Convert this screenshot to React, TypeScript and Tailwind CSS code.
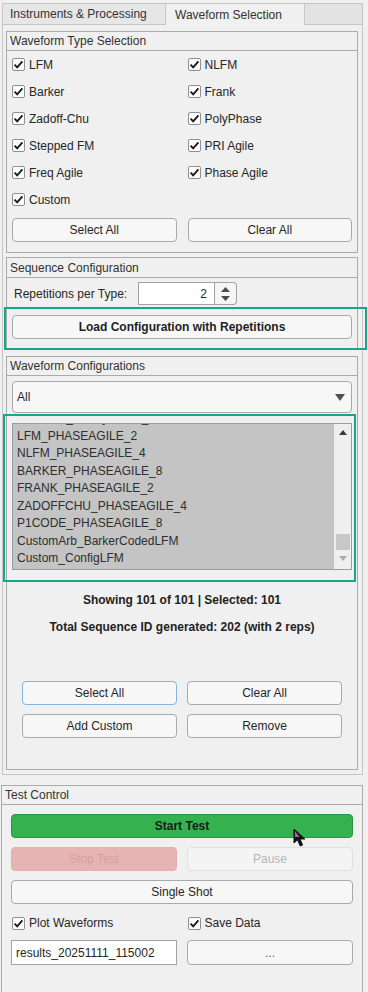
import React from "react";

const waveTypes: [string, string][] = [
  ["LFM", "NLFM"],
  ["Barker", "Frank"],
  ["Zadoff-Chu", "PolyPhase"],
  ["Stepped FM", "PRI Agile"],
  ["Freq Agile", "Phase Agile"],
  ["Custom", ""],
];

const listItems = [
  "P1CODE_FREQAGILE_8",
  "LFM_PHASEAGILE_2",
  "NLFM_PHASEAGILE_4",
  "BARKER_PHASEAGILE_8",
  "FRANK_PHASEAGILE_2",
  "ZADOFFCHU_PHASEAGILE_4",
  "P1CODE_PHASEAGILE_8",
  "CustomArb_BarkerCodedLFM",
  "Custom_ConfigLFM",
];

const Check: React.FC<{ label: string }> = ({ label }) => (
  <div className="flex items-center h-full">
    <span className="w-[13px] h-[13px] bg-white border border-[#8f8f8f] rounded-[2px] flex items-center justify-center">
      <svg width="11" height="11" viewBox="0 0 11 11">
        <path d="M1.6 5.6 L4.2 8.4 L9.4 2.3" fill="none" stroke="#1a1a1a" strokeWidth="1.9" />
      </svg>
    </span>
    <span className="ml-[4px]">{label}</span>
  </div>
);

// plain push button, pass height + colours in className
const Btn: React.FC<{ children: React.ReactNode; className: string }> = ({ children, className }) => (
  <div className={`rounded-[4px] border flex items-center justify-center ${className}`}>{children}</div>
);

const Panel: React.FC<{ title: string; titleH: string; className?: string; children: React.ReactNode }> = ({
  title,
  titleH,
  className = "",
  children,
}) => (
  <div className={`border border-[#ababab] ${className}`}>
    <div className={`${titleH} border-b border-[#ababab] pl-[3px] flex items-center text-[#303030]`}>{title}</div>
    {children}
  </div>
);

export default function App() {
  return (
    <div className="relative w-[368px] h-[992px] overflow-hidden bg-[#f0f0f0] pt-[3px] font-['Liberation_Sans',Arial,Helvetica,sans-serif] text-[12px] text-[#262626]">
      {/* tab group */}
      <div className="ml-[2px] w-[361px]">
        <div className="flex h-[22px]">
          <div className="w-[164px] bg-[#e6e6e6] border border-[#c6c6c6] pl-[7px] flex items-center text-[#333]">
            Instruments &amp; Processing
          </div>
          <div className="w-[138px] bg-[#f0f0f0] border-t border-[#c6c6c6] pl-[9px] flex items-center text-[#333]">
            Waveform Selection
          </div>
          <div className="flex-1 bg-[#e3e3e3] border border-[#c6c6c6]"></div>
        </div>
        <div className="border border-t-0 border-[#c6c6c6] pl-[3px] pr-[4px] pt-[6px] pb-[4px]">
          {/* Waveform type selection */}
          <Panel title="Waveform Type Selection" titleH="h-[19px]" className="pb-[10px]">
            <div className="grid grid-cols-2 gap-x-[11px] px-[5px]">
              {waveTypes.map(([a, b], i) => (
                <React.Fragment key={i}>
                  <div className="h-[27px]">
                    <Check label={a} />
                  </div>
                  <div className="h-[27px]">{b && <Check label={b} />}</div>
                </React.Fragment>
              ))}
              <Btn className="mt-[5px] h-[24px] border-[#a9a9a9] bg-[#f7f7f7]">Select All</Btn>
              <Btn className="mt-[5px] h-[24px] border-[#a9a9a9] bg-[#f7f7f7]">Clear All</Btn>
            </div>
          </Panel>

          {/* Sequence configuration */}
          <Panel title="Sequence Configuration" titleH="h-[20px]" className="mt-[4px] pb-[10px]">
            <div className="mt-[4px] h-[23px] flex items-center pl-[7px]">
              <span className="w-[124px]">Repetitions per Type:</span>
              <div className="w-[77px] h-[23px] bg-white border border-[#a3a3a3] flex items-center justify-end pr-[7px]">2</div>
              <div className="w-[22px] h-[23px] border border-l-0 border-[#a3a3a3] rounded-r-[4px] bg-[#f5f5f5] flex flex-col items-center justify-center gap-[4px]">
                <svg width="9" height="5" viewBox="0 0 9 5"><path d="M0 5 L4.5 0 L9 5 Z" fill="#4a4a4a" /></svg>
                <svg width="9" height="5" viewBox="0 0 9 5"><path d="M0 0 L4.5 5 L9 0 Z" fill="#4a4a4a" /></svg>
              </div>
            </div>
            <div className="mt-[10px] px-[5px]">
              <Btn className="h-[24px] border-[#a9a9a9] bg-[#f7f7f7] font-bold text-[#1f1f1f]">Load Configuration with Repetitions</Btn>
            </div>
          </Panel>

          {/* Waveform configurations */}
          <Panel title="Waveform Configurations" titleH="h-[19px]" className="mt-[6px] pb-[31px]">
            <div className="px-[5px]">
              <div className="mt-[5px] h-[32px] rounded-[4px] border border-[#a9a9a9] bg-[#f7f7f7] flex items-center justify-between pl-[4px] pr-[6px]">
                <span>All</span>
                <svg width="10" height="7" viewBox="0 0 10 7"><path d="M0 0 L10 0 L5 7 Z" fill="#505050" /></svg>
              </div>
              <div className="mt-[10px] h-[147px] border border-[#9c9c9c] bg-[#c4c4c4] flex overflow-hidden">
                <div className="flex-1 overflow-hidden pl-[4px] text-[#2e2e2e]">
                  <div className="-mt-[14px]">
                    {listItems.map((it, i) => (
                      <div key={i} className="h-[17.5px] leading-[17.5px] whitespace-nowrap">
                        {it}
                      </div>
                    ))}
                  </div>
                </div>
                <div className="w-[17px] bg-[#efefef] flex flex-col items-center">
                  <svg className="mt-[6px]" width="8" height="5" viewBox="0 0 8 5"><path d="M0 5 L4 0 L8 5 Z" fill="#3c3c3c" /></svg>
                  <div className="mt-[99px] w-[14px] h-[16px] bg-[#c8c8c8]"></div>
                  <svg className="mt-[6px]" width="8" height="5" viewBox="0 0 8 5"><path d="M0 0 L4 5 L8 0 Z" fill="#ababab" /></svg>
                </div>
              </div>
            </div>
            <div className="mt-[22px] h-[17px] leading-[17px] text-center font-bold text-[#222]">
              Showing 101 of 101 | Selected: 101
            </div>
            <div className="mt-[10px] h-[17px] leading-[17px] text-center font-bold text-[#222]">
              Total Sequence ID generated: 202 (with 2 reps)
            </div>
            <div className="mt-[45px] px-[15px] grid grid-cols-2 gap-x-[10px] gap-y-[9px]">
              <Btn className="h-[24px] border-[#86b4dc] bg-[#f7f7f7]">Select All</Btn>
              <Btn className="h-[24px] border-[#a9a9a9] bg-[#f7f7f7]">Clear All</Btn>
              <Btn className="h-[24px] border-[#a9a9a9] bg-[#f7f7f7]">Add Custom</Btn>
              <Btn className="h-[24px] border-[#a9a9a9] bg-[#f7f7f7]">Remove</Btn>
            </div>
          </Panel>
        </div>
      </div>

      {/* Test control */}
      <div className="mt-[10px] ml-[1px] w-[362px] h-[220px] border border-[#ababab]">
        <div className="h-[19px] border-b border-[#ababab] pl-[3px] flex items-center text-[#303030]">Test Control</div>
        <div className="px-[9px] pt-[9px]">
          <Btn className="h-[24px] border-[#2b9443] bg-[#35b24f] font-bold text-[#1a1a1a]">Start Test</Btn>
          <div className="mt-[9px] grid grid-cols-2 gap-x-[10px]">
            <Btn className="h-[24px] border-[#e2b0b0] bg-[#e7b4b4] text-[#d7a0a0]">Stop Test</Btn>
            <Btn className="h-[24px] border-[#e0e0e0] bg-[#f4f4f4] text-[#b6b6b6]">Pause</Btn>
          </div>
          <Btn className="mt-[9px] h-[24px] border-[#a9a9a9] bg-[#f7f7f7]">Single Shot</Btn>
          <div className="mt-[9px] h-[20px] grid grid-cols-2 gap-x-[10px] pl-[1px]">
            <Check label="Plot Waveforms" />
            <Check label="Save Data" />
          </div>
          <div className="mt-[7px] grid grid-cols-2 gap-x-[10px]">
            <div className="h-[25px] bg-white border border-[#a3a3a3] flex items-center pl-[4px]">results_20251111_115002</div>
            <Btn className="h-[25px] border-[#a9a9a9] bg-[#f7f7f7] text-[#666]">...</Btn>
          </div>
        </div>
      </div>

      {/* highlight annotations */}
      <div className="absolute left-[4px] top-[307px] w-[363px] h-[43px] border-2 border-[#14a88a]"></div>
      <div className="absolute left-[3px] top-[414px] w-[353px] h-[168px] border-2 border-[#14a88a]"></div>

      {/* mouse cursor */}
      <svg className="absolute left-[293px] top-[828px]" width="13" height="20" viewBox="0 0 13 20">
        <path d="M1 1 L1 15 L4.5 11.8 L7.2 18 L9.6 17 L7 11 L11.8 11 Z" fill="#111" stroke="#111" strokeWidth="1" />
        <path d="M2 3 L2 9 L6.5 9 Z" fill="#b45fb0" />
      </svg>
    </div>
  );
}
